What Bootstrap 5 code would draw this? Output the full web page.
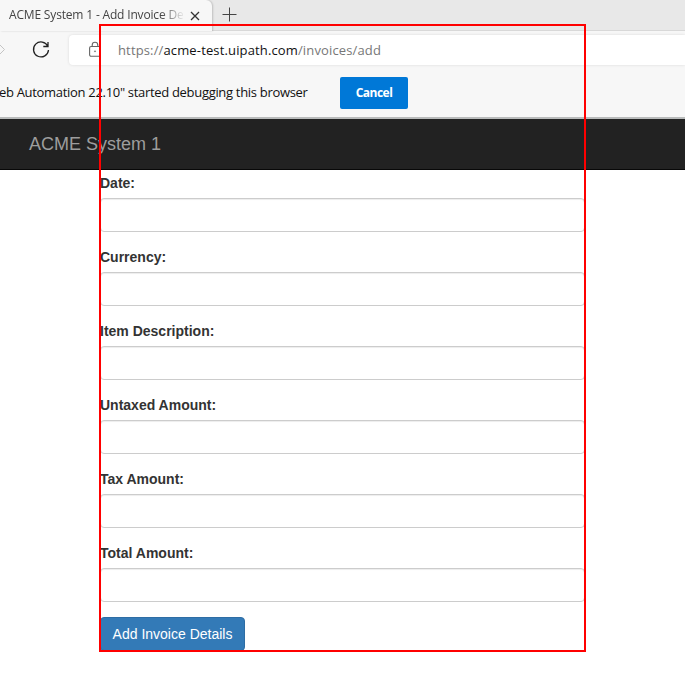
<!DOCTYPE html>
<html lang="en">
<head>
<meta charset="utf-8">
<meta name="viewport" content="width=device-width, initial-scale=1">
<title>ACME System 1 - Add Invoice Details</title>
<link href="https://cdn.jsdelivr.net/npm/bootstrap@5.3.0/dist/css/bootstrap.min.css" rel="stylesheet">
<style>
  body { font: 14px/20px "Liberation Sans", Arial, sans-serif; color: #333; height: 676px; }
  .chrome-ui { font-family: "Open Sans", "Segoe UI", sans-serif; background: #f7f7f7; height: 119px; border-bottom: 2px solid #b9bbbb; }
  .tab-strip { height: 31px; background: #e8e8e8; border-bottom: 1px solid #d8d8d8; }
  .active-tab { width: 212px; height: 31px; background: #f7f7f7; padding-left: 9px; border-radius: 0 6px 0 0; box-shadow: 1px 0 2px rgba(0,0,0,.18); }
  .tab-title { width: 174px; font-size: 12px; line-height: 30px; letter-spacing: -.17px; color: #444;
    -webkit-mask-image: linear-gradient(90deg, #000 152px, transparent 176px); mask-image: linear-gradient(90deg, #000 152px, transparent 176px); }
  .tab-close { margin: 11px 0 0 7px; }
  .new-tab { margin: 7px 0 0 10px; }
  .toolbar-row { height: 38px; padding-top: 4px; }
  .reload { margin-left: 27px; }
  .address { height: 30px; margin-left: 19px; padding-left: 20px; border-radius: 4px 0 0 4px; box-shadow: 0 0 3px rgba(0,0,0,.12); color: #777; font-size: 13px; line-height: 30px; }
  .url { margin-left: 17px; letter-spacing: .14px; }
  .host { color: #111; }
  .debug-bar { height: 48px; font-size: 13px; color: #111; }
  .debug-text { width: 341px; margin-left: -1px; letter-spacing: -.31px; line-height: 20px; padding-bottom: 2px; }
  .btn-cancel { width: 68px; height: 32px; font-size: 12px; font-weight: 700; letter-spacing: -.5px; line-height: 32px; border-radius: 2px; color: #fff; background: #0078d7; }
  .site-nav { height: 51px; background: #222; border-bottom: 1px solid #080808; padding-left: 29px; }
  .site-nav .navbar-brand { font-size: 18px; line-height: 20px; color: #9d9d9d; }
  .invoice-form { width: 485px; margin-left: 100px; padding-top: 3px; }
  .invoice-form label { margin-bottom: 5px; line-height: 20px; }
  .invoice-form .form-control { height: 34px; border: 1px solid #ccc; border-radius: 4px; box-shadow: inset 0 1px 1px rgba(0,0,0,.075); }
  .field { margin-bottom: 15px; }
  .btn-add { height: 34px; width: 145px; font-size: 14px; line-height: 20px; color: #fff; background: #337ab7; border: 1px solid #2e6da4; border-radius: 4px; }
  .highlight { left: 99px; top: 24px; width: 487px; height: 628px; border: 2px solid #f00; }
</style>
<script src="https://cdn.jsdelivr.net/npm/bootstrap@5.3.0/dist/js/bootstrap.bundle.min.js"></script>
</head>
<body class="position-relative bg-white overflow-hidden">
<header class="chrome-ui">
  <div class="tab-strip d-flex align-items-start">
    <div class="active-tab d-flex align-items-start">
      <div class="tab-title text-nowrap overflow-hidden">ACME System 1 - Add Invoice Details</div>
      <svg class="tab-close" width="10" height="10" viewBox="0 0 10 10" stroke="#333" stroke-width="1.3"><path d="M1 1l8 8M9 1l-8 8"/></svg>
    </div>
    <svg class="new-tab" width="15" height="15" viewBox="0 0 15 15" stroke="#444"><path d="M7.5 .5v14M.5 7.5h14"/></svg>
  </div>
  <div class="toolbar-row d-flex align-items-start">
    <svg width="5" height="30" viewBox="0 0 5 30" fill="none" stroke="#c4c4c4"><path d="M0 10l4.5 4.5L0 19"/></svg>
    <svg class="reload" width="18" height="30" viewBox="0 0 18 30" fill="none" stroke="#222" stroke-width="1.3"><path d="M15.8 11.2A7.5 7.5 0 1 0 16.5 15M16 7v4.5h-4.7"/></svg>
    <div class="address bg-white flex-grow-1 d-flex">
      <svg width="12" height="30" viewBox="0 0 12 30" fill="none" stroke="#666" stroke-width="1.1"><rect x=".6" y="11.5" width="10.8" height="9.8" rx="1.5"/><path d="M3.2 11.5V10a2.8 2.8 0 0 1 5.6 0v1.5"/><circle cx="6" cy="16.3" r=".6" fill="#666" stroke-width=".5"/></svg>
      <div class="url text-nowrap">https://<span class="host">acme-test.uipath.com</span>/invoices/add</div>
    </div>
  </div>
  <div class="debug-bar d-flex align-items-center">
    <div class="debug-text text-nowrap">eb Automation 22.10" started debugging this browser</div>
    <button type="button" class="btn btn-cancel border-0 p-0">Cancel</button>
  </div>
</header>
<nav class="site-nav navbar py-0"><a class="navbar-brand p-0 m-0" href="#">ACME System 1</a></nav>
<form class="invoice-form">
  <div class="field"><label class="d-block fw-bold" for="date">Date:</label><input id="date" class="form-control"></div>
  <div class="field"><label class="d-block fw-bold" for="currency">Currency:</label><input id="currency" class="form-control"></div>
  <div class="field"><label class="d-block fw-bold" for="item">Item Description:</label><input id="item" class="form-control"></div>
  <div class="field"><label class="d-block fw-bold" for="untaxed">Untaxed Amount:</label><input id="untaxed" class="form-control"></div>
  <div class="field"><label class="d-block fw-bold" for="tax">Tax Amount:</label><input id="tax" class="form-control"></div>
  <div class="field"><label class="d-block fw-bold" for="total">Total Amount:</label><input id="total" class="form-control"></div>
  <button type="button" class="btn btn-add p-0 d-block">Add Invoice Details</button>
</form>
<div class="highlight position-absolute pe-none"></div>
</body>
</html>
